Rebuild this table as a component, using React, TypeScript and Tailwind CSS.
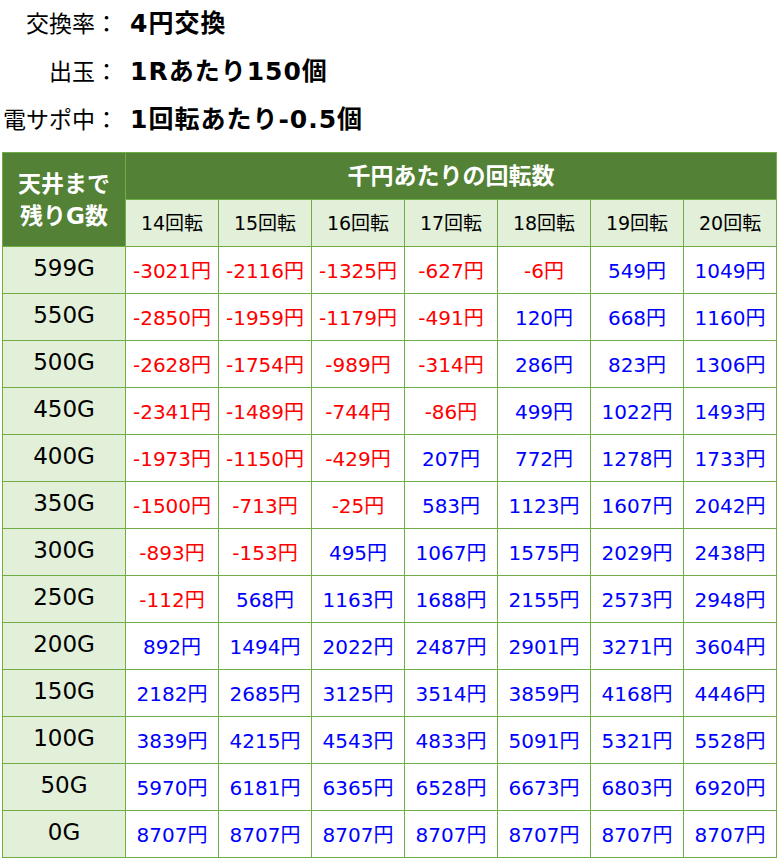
const cols = [14, 15, 16, 17, 18, 19, 20];

const rows: [string, number[]][] = [
  ["599G", [-3021, -2116, -1325, -627, -6, 549, 1049]],
  ["550G", [-2850, -1959, -1179, -491, 120, 668, 1160]],
  ["500G", [-2628, -1754, -989, -314, 286, 823, 1306]],
  ["450G", [-2341, -1489, -744, -86, 499, 1022, 1493]],
  ["400G", [-1973, -1150, -429, 207, 772, 1278, 1733]],
  ["350G", [-1500, -713, -25, 583, 1123, 1607, 2042]],
  ["300G", [-893, -153, 495, 1067, 1575, 2029, 2438]],
  ["250G", [-112, 568, 1163, 1688, 2155, 2573, 2948]],
  ["200G", [892, 1494, 2022, 2487, 2901, 3271, 3604]],
  ["150G", [2182, 2685, 3125, 3514, 3859, 4168, 4446]],
  ["100G", [3839, 4215, 4543, 4833, 5091, 5321, 5528]],
  ["50G", [5970, 6181, 6365, 6528, 6673, 6803, 6920]],
  ["0G", [8707, 8707, 8707, 8707, 8707, 8707, 8707]],
];

const specs = [
  ["交換率", "4円交換"],
  ["出玉", "1Rあたり150個"],
  ["電サポ中", "1回転あたり-0.5個"],
];

export default function App() {
  return (
    <div
      className="bg-white w-[777px] h-[858px] overflow-hidden text-black"
      style={{ fontFamily: '"DejaVu Sans", "Noto Sans CJK JP", sans-serif' }}
    >
      {/* spec lines */}
      <div className="flex flex-col h-[152px]">
        {specs.map(([k, v]) => (
          <div key={k} className="flex items-center h-[48px]">
            <div className="w-[120px] text-right text-[23px] whitespace-nowrap pr-[2px]">
              {k}：
            </div>
            <div className="pl-[10px] text-[25px] tracking-[1px] font-bold whitespace-nowrap">
              {v}
            </div>
          </div>
        ))}
      </div>

      <table className="ml-[2px] border-collapse table-fixed w-[775px]">
        <colgroup>
          <col className="w-[123px]" />
          {cols.map((c) => (
            <col key={c} className="w-[93px]" />
          ))}
        </colgroup>
        <thead>
          <tr className="h-[47px]">
            <th
              rowSpan={2}
              className="border border-[#70ad47] bg-[#538135] text-white text-[23px] font-bold leading-[32px]"
            >
              天井まで
              <br />
              残りG数
            </th>
            <th
              colSpan={7}
              className="border border-[#70ad47] bg-[#538135] text-white text-[23px] font-bold"
            >
              千円あたりの回転数
            </th>
          </tr>
          <tr className="h-[47px]">
            {cols.map((c) => (
              <th
                key={c}
                className="border border-[#70ad47] bg-[#e2efd9] text-[19px] font-normal"
              >
                {c}回転
              </th>
            ))}
          </tr>
        </thead>
        <tbody>
          {rows.map(([g, vals]) => (
            <tr key={g} className="h-[47px]">
              <td className="border border-[#70ad47] bg-[#e2efd9] text-center text-[23px] pb-[4px]">
                {g}
              </td>
              {vals.map((n, i) => (
                <td
                  key={i}
                  className={
                    "border border-[#70ad47] text-center text-[20px] pt-[2px] whitespace-nowrap " +
                    (n < 0 ? "text-[#ff0000]" : "text-[#0000ff]")
                  }
                >
                  {n}円
                </td>
              ))}
            </tr>
          ))}
        </tbody>
      </table>
    </div>
  );
}
